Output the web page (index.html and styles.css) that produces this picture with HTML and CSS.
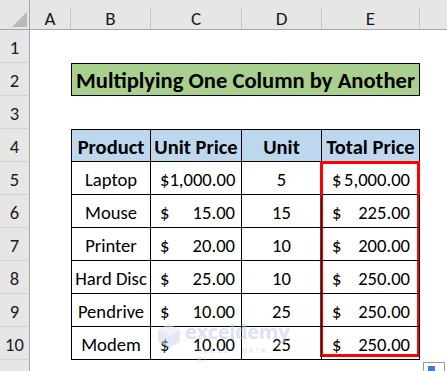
FILE: index.html
```html
<!DOCTYPE html>
<html>
<head>
<meta charset="utf-8">
<link rel="stylesheet" href="styles.css">
</head>
<body>
<div class="sheet">
  <div class="corner"><svg width="30" height="30" viewBox="0 0 30 30"><polygon points="27,12 27,27 12,27" fill="#b9b9b9"/></svg></div>
  <div class="ch"><div class="ch-in">A</div></div>
  <div class="ch"><div class="ch-in">B</div></div>
  <div class="ch"><div class="ch-in">C</div></div>
  <div class="ch"><div class="ch-in">D</div></div>
  <div class="ch"><div class="ch-in">E</div></div>
  <div class="ch"><div class="ch-in last"></div></div>

  <div class="rh">1</div><div class="c"></div><div class="c span4"></div><div class="c"></div>

  <div class="rh">2</div><div class="c"></div><div class="title span4">Multiplying One Column by Another</div><div class="c"></div>

  <div class="rh">3</div><div class="c"></div><div class="c span4"></div><div class="c"></div>

  <div class="rh">4</div><div class="c"></div>
  <div class="t th first">Product</div><div class="t th">Unit Price</div><div class="t th">Unit</div><div class="t th">Total Price</div>
  <div class="c"></div>

  <div class="rh">5</div><div class="c"></div>
  <div class="t tc first">Laptop</div>
  <div class="t acc"><span>$</span><span>1,000.00</span></div>
  <div class="t tc">5</div>
  <div class="t acc tot"><span>$</span><span>5,000.00</span><div class="redbox"></div></div>
  <div class="c"></div>

  <div class="rh">6</div><div class="c"></div>
  <div class="t tc first">Mouse</div>
  <div class="t acc"><span>$</span><span>15.00</span></div>
  <div class="t tc">15</div>
  <div class="t acc tot"><span>$</span><span>225.00</span></div>
  <div class="c"></div>

  <div class="rh">7</div><div class="c"></div>
  <div class="t tc first">Printer</div>
  <div class="t acc"><span>$</span><span>20.00</span></div>
  <div class="t tc">10</div>
  <div class="t acc tot"><span>$</span><span>200.00</span></div>
  <div class="c"></div>

  <div class="rh">8</div><div class="c"></div>
  <div class="t tc first">Hard Disc</div>
  <div class="t acc"><span>$</span><span>25.00</span></div>
  <div class="t tc">10</div>
  <div class="t acc tot"><span>$</span><span>250.00</span></div>
  <div class="c"></div>

  <div class="rh">9</div><div class="c"></div>
  <div class="t tc first">Pendrive</div>
  <div class="t acc"><span>$</span><span>10.00</span></div>
  <div class="t tc">25</div>
  <div class="t acc tot"><span>$</span><span>250.00</span></div>
  <div class="c"></div>

  <div class="rh">10</div><div class="c"></div>
  <div class="t tc first">Modem</div>
  <div class="t acc wm-host"><span>$</span><span>10.00</span>
    <div class="watermark">
      <svg class="wm-logo" width="24" height="26" viewBox="0 0 24 26"><polygon points="12,1 23,7 23,19 12,25 1,19 1,7" fill="#c9d3ea"/><polygon points="12,1 23,7 12,13 1,7" fill="#e1e7f4"/></svg>
      <div class="wm-text"><div class="wm-name">exceldemy</div><div class="wm-sub">EXCEL · DATA · BI</div></div>
    </div>
  </div>
  <div class="t tc">25</div>
  <div class="t acc tot"><span>$</span><span>250.00</span></div>
  <div class="c"></div>

  <div class="rh rh-last"></div><div class="c"></div><div class="c span4"></div>
  <div class="c qa-cell"><div class="qa"><div class="qa-blue"></div></div></div>
</div>
</body>
</html>
```

FILE: styles.css
```css
html, body {
  margin: 0;
  padding: 0;
  background: #ffffff;
  overflow: hidden;
}
body {
  font-family: Carlito, Calibri, "Open Sans", "Liberation Sans", sans-serif;
  color: #000;
}
.sheet {
  display: grid;
  grid-template-columns: 30px 41px 80px 91px 80px 98px 1fr;
  grid-template-rows: 30px repeat(10, 33px) 1fr;
  width: 447px;
  height: 371px;
}
.corner {
  background: #e6e6e6;
  border-right: 1px solid #a6a6a6;
  border-bottom: 1px solid #a6a6a6;
  box-sizing: border-box;
  overflow: hidden;
}
.corner svg { display: block; }
.ch {
  background: #e6e6e6;
  border-bottom: 1px solid #a6a6a6;
  box-sizing: border-box;
  padding-top: 7px;
}
.ch-in {
  height: 100%;
  border-right: 1px solid #c6c6c6;
  display: flex;
  align-items: center;
  justify-content: center;
  font-size: 19px;
  color: #1a1a1a;
  box-sizing: border-box;
}
.ch-in.last { border-right: none; }
.rh {
  background: #e6e6e6;
  border-right: 1px solid #a6a6a6;
  border-bottom: 1px solid #d2d2d2;
  box-sizing: border-box;
  display: flex;
  align-items: flex-end;
  justify-content: center;
  padding-bottom: 3px;
  font-size: 18.5px;
  color: #1a1a1a;
}
.rh-last { border-bottom: none; }
.c { background: #fff; }
.span4 { grid-column: span 4; }
.title {
  grid-column: span 4;
  background: #a9d08e;
  border: 1px solid #000;
  box-sizing: border-box;
  display: flex;
  align-items: center;
  justify-content: center;
  font-weight: bold;
  font-size: 22.6px;
  white-space: nowrap;
  padding-top: 1px;
}
.t {
  border-right: 1px solid #000;
  border-bottom: 1px solid #000;
  box-sizing: border-box;
  font-size: 18.6px;
  display: flex;
  align-items: center;
  position: relative;
  padding-top: 2px;
}
.t.first { border-left: 1px solid #000; }
.th {
  background: #bdd7ee;
  border-top: 1px solid #000;
  font-weight: bold;
  font-size: 20.5px;
  justify-content: center;
  white-space: nowrap;
}
.tc { justify-content: center; }
.acc {
  justify-content: space-between;
  padding-left: 9px;
  padding-right: 6px;
}
.tot {
  padding-left: 10px;
  padding-right: 9px;
}
.redbox {
  position: absolute;
  left: -2px;
  top: -1px;
  width: 100px;
  height: 196px;
  border: 3.5px solid #ff0000;
  box-sizing: border-box;
  pointer-events: none;
}
.watermark {
  position: absolute;
  left: 6px;
  top: -5px;
  display: flex;
  align-items: flex-start;
  gap: 4px;
  opacity: 0.5;
  pointer-events: none;
  z-index: 2;
}
.wm-logo { display: block; margin-top: 1px; }
.wm-name {
  font-family: "Open Sans", "Liberation Sans", sans-serif;
  font-size: 20px;
  font-weight: bold;
  color: #b9c6e4;
  line-height: 20px;
  letter-spacing: -0.3px;
}
.wm-sub {
  font-family: "Liberation Sans", sans-serif;
  font-size: 7px;
  line-height: 9px;
  color: #bfc5d2;
  letter-spacing: 2px;
  padding-left: 12px;
  margin-top: 4px;
}
.qa-cell {
  display: flex;
  align-items: flex-end;
  padding-left: 3px;
}
.qa {
  width: 22px;
  height: 9px;
  border: 1px solid #9a9a9a;
  border-bottom: none;
  box-sizing: border-box;
  background: #fff;
  padding: 3px 0 0 4px;
}
.qa-blue {
  width: 7px;
  height: 6px;
  background: #3b7be4;
}
```
